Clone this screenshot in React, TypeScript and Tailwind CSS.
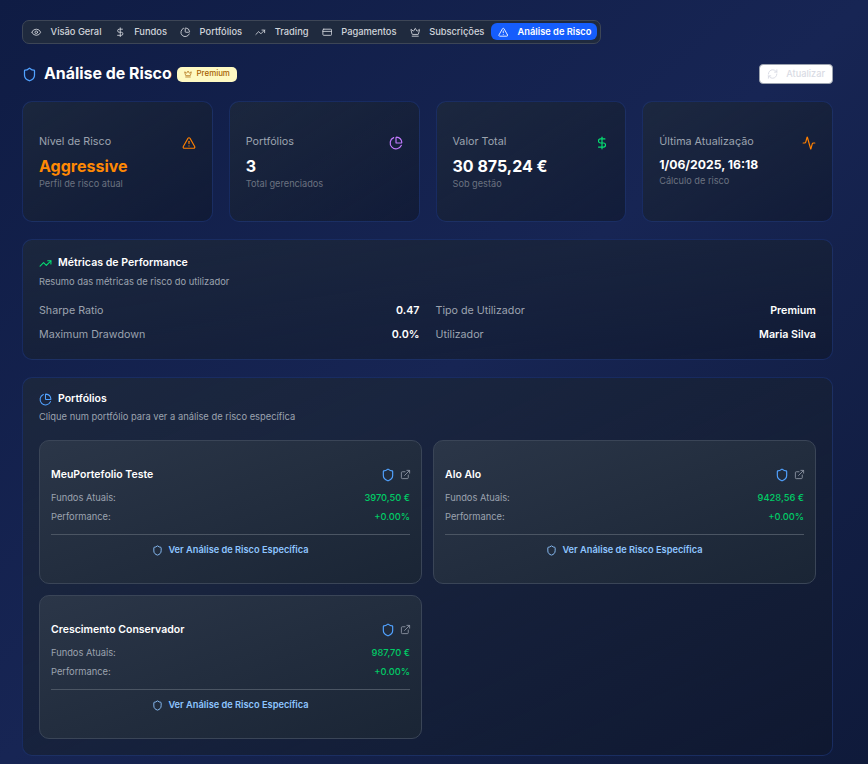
import React from "react";
import {
  Activity,
  ChartPie,
  CreditCard,
  Crown,
  DollarSign,
  ExternalLink,
  Eye,
  RefreshCw,
  Shield,
  TrendingUp,
  TriangleAlert,
} from "lucide-react";

const navItems = [
  { label: "Visão Geral", icon: Eye },
  { label: "Fundos", icon: DollarSign },
  { label: "Portfólios", icon: ChartPie },
  { label: "Trading", icon: TrendingUp },
  { label: "Pagamentos", icon: CreditCard },
  { label: "Subscrições", icon: Crown },
];

const stats = [
  { title: "Nível de Risco", value: "Aggressive", sub: "Perfil de risco atual", icon: TriangleAlert, iconClass: "text-[#ff8000]", valueClass: "text-[#ff8904] text-[16px] leading-[20px]" },
  { title: "Portfólios", value: "3", sub: "Total gerenciados", icon: ChartPie, iconClass: "text-[#c27aff]", valueClass: "text-white text-[16px] leading-[20px]" },
  { title: "Valor Total", value: "30 875,24 €", sub: "Sob gestão", icon: DollarSign, iconClass: "text-[#05df72]", valueClass: "text-white text-[16px] leading-[20px]" },
  { title: "Última Atualização", value: "1/06/2025, 16:18", sub: "Cálculo de risco", icon: Activity, iconClass: "text-[#ff8000]", valueClass: "text-white text-[12.2px] leading-[17px]" },
];

const portfolios = [
  { name: "MeuPortefolio Teste", funds: "3970,50 €" },
  { name: "Alo Alo", funds: "9428,56 €" },
  { name: "Crescimento Conservador", funds: "987,70 €" },
];

function Metric({ label, value }: { label: string; value: string }) {
  return (
    <div className="flex items-center justify-between h-[24px]">
      <span className="text-[10.7px] text-[#9ca3af]">{label}</span>
      <span className="text-[10.7px] font-semibold text-white">{value}</span>
    </div>
  );
}

function PortfolioCard({ name, funds }: { name: string; funds: string }) {
  return (
    <div className="h-[144px] rounded-[10px] border border-[#3a4557] bg-gradient-to-br from-[#2b3648] to-[#1a2535] px-[11px] pt-[25px]">
      <div className="flex items-center justify-between h-[18px]">
        <span className="text-[10.5px] font-semibold text-white">{name}</span>
        <div className="flex items-center gap-[5px] -mr-[1px]">
          <Shield className="w-[14px] h-[14px] text-[#51a2ff]" strokeWidth={2} />
          <ExternalLink className="w-[11px] h-[11px] text-[#8b93a1]" strokeWidth={2} />
        </div>
      </div>
      <div className="mt-[5px] flex items-center justify-between h-[19px] text-[9.3px]">
        <span className="text-[#9ca3af]">Fundos Atuais:</span>
        <span className="font-medium text-[#00cc66]">{funds}</span>
      </div>
      <div className="flex items-center justify-between h-[19px] text-[9.3px]">
        <span className="text-[#9ca3af]">Performance:</span>
        <span className="font-medium text-[#00cc66]">+0.00%</span>
      </div>
      <div className="mt-[7px] border-t border-[#4b5563] pt-[2px] flex items-center justify-center gap-[5px] h-[30px]">
        <Shield className="w-[11px] h-[11px] text-[#8ec5ff]" strokeWidth={2} />
        <span className="text-[9.25px] font-semibold text-[#8ec5ff]">Ver Análise de Risco Específica</span>
      </div>
    </div>
  );
}

export default function App() {
  return (
    <div
      className="min-h-[764px] bg-gradient-to-br from-[#0f1c44] via-[#172554] to-[#0f1a3a] pl-[22px] pr-[35px] pt-[19px] pb-[9px]"
      style={{ fontFamily: "Inter, 'Liberation Sans', sans-serif" }}
    >
      <div className="inline-flex items-center h-[24px] rounded-[7px] border border-[#3d4656] bg-[#1f2a3e] pl-[1.5px] pr-[3px]">
        {navItems.map((item) => (
          <div key={item.label} className="flex items-center gap-[9px] h-[17px] px-[6.6px] text-[9.3px] font-medium text-[#d1d5db]">
            <item.icon className="w-[10.5px] h-[10.5px]" strokeWidth={2} />
            <span>{item.label}</span>
          </div>
        ))}
        <div className="flex items-center gap-[9px] h-[17px] pl-[7px] pr-[6px] rounded-[6px] bg-[#155dfc] text-[9.3px] font-semibold text-white">
          <TriangleAlert className="w-[10.5px] h-[10.5px]" strokeWidth={2} />
          <span>Análise de Risco</span>
        </div>
      </div>

      <div className="mt-[20px] flex items-center justify-between h-[21px]">
        <div className="flex items-center">
          <Shield className="w-[15px] h-[15px] text-[#51a2ff]" strokeWidth={2} />
          <h1 className="ml-[7px] text-[15.9px] font-bold text-white">Análise de Risco</h1>
          <span className="ml-[5px] flex items-center justify-center gap-[5px] h-[15px] w-[60px] rounded-[5px] bg-[#fef9c2] text-[7.9px] font-medium text-[#a65f00]">
            <Crown className="w-[8px] h-[8px]" strokeWidth={2} />
            Premium
          </span>
        </div>
        <button className="flex items-center gap-[8px] h-[20px] w-[74px] px-[7px] rounded-[4px] border border-[#9ca3af] bg-white text-[9.2px] font-medium text-[#d9dbe4]">
          <RefreshCw className="w-[12px] h-[12px]" strokeWidth={2} />
          Atualizar
        </button>
      </div>

      <div className="mt-[16px] grid grid-cols-4 gap-[16px]">
        {stats.map((s) => (
          <div key={s.title} className="h-[121px] rounded-[10px] border border-[#1e3a8a]/50 bg-gradient-to-br from-[#1e293b]/80 to-[#0f172a]/60 pl-[16px] pr-[16px] pt-[31px]">
            <div className="flex items-center justify-between h-[18px]">
              <span className="text-[10.75px] font-normal text-[#9ca3af]">{s.title}</span>
              <s.icon className={`w-[14px] h-[14px] mt-[2px] ${s.iconClass}`} strokeWidth={2} />
            </div>
            <div className={`mt-[5px] font-bold ${s.valueClass}`}>{s.value}</div>
            <div className="mt-[1px] text-[9.2px] text-[#6b7280]">{s.sub}</div>
          </div>
        ))}
      </div>

      <div className="mt-[17px] h-[121px] rounded-[10px] border border-[#1e3a8a]/50 bg-gradient-to-br from-[#1e293b]/80 to-[#0f172a]/60 px-[16px] pt-[15px]">
        <div className="flex items-center gap-[6px] h-[17px]">
          <TrendingUp className="w-[13px] h-[13px] text-[#05df72]" strokeWidth={2} />
          <span className="text-[10.6px] font-semibold text-white">Métricas de Performance</span>
        </div>
        <p className="mt-[3px] text-[9.35px] text-[#9ca3af]">Resumo das métricas de risco do utilizador</p>
        <div className="mt-[10px] grid grid-cols-2 gap-x-[16px]">
          <Metric label="Sharpe Ratio" value="0.47" />
          <Metric label="Tipo de Utilizador" value="Premium" />
          <Metric label="Maximum Drawdown" value="0.0%" />
          <Metric label="Utilizador" value="Maria Silva" />
        </div>
      </div>

      <div className="mt-[17px] h-[379px] rounded-[10px] border border-[#1e3a8a]/50 bg-gradient-to-br from-[#1e293b]/80 to-[#0f172a]/60 px-[16px] pt-[13px]">
        <div className="flex items-center gap-[6px] h-[17px]">
          <ChartPie className="w-[13px] h-[13px] text-[#51a2ff]" strokeWidth={2} />
          <span className="text-[10.5px] font-semibold text-white">Portfólios</span>
        </div>
        <p className="mt-[2px] text-[9.35px] text-[#9ca3af]">Clique num portfólio para ver a análise de risco específica</p>
        <div className="mt-[16px] grid grid-cols-2 gap-x-[11px] gap-y-[11px]">
          {portfolios.map((p) => (
            <PortfolioCard key={p.name} name={p.name} funds={p.funds} />
          ))}
        </div>
      </div>
    </div>
  );
}
